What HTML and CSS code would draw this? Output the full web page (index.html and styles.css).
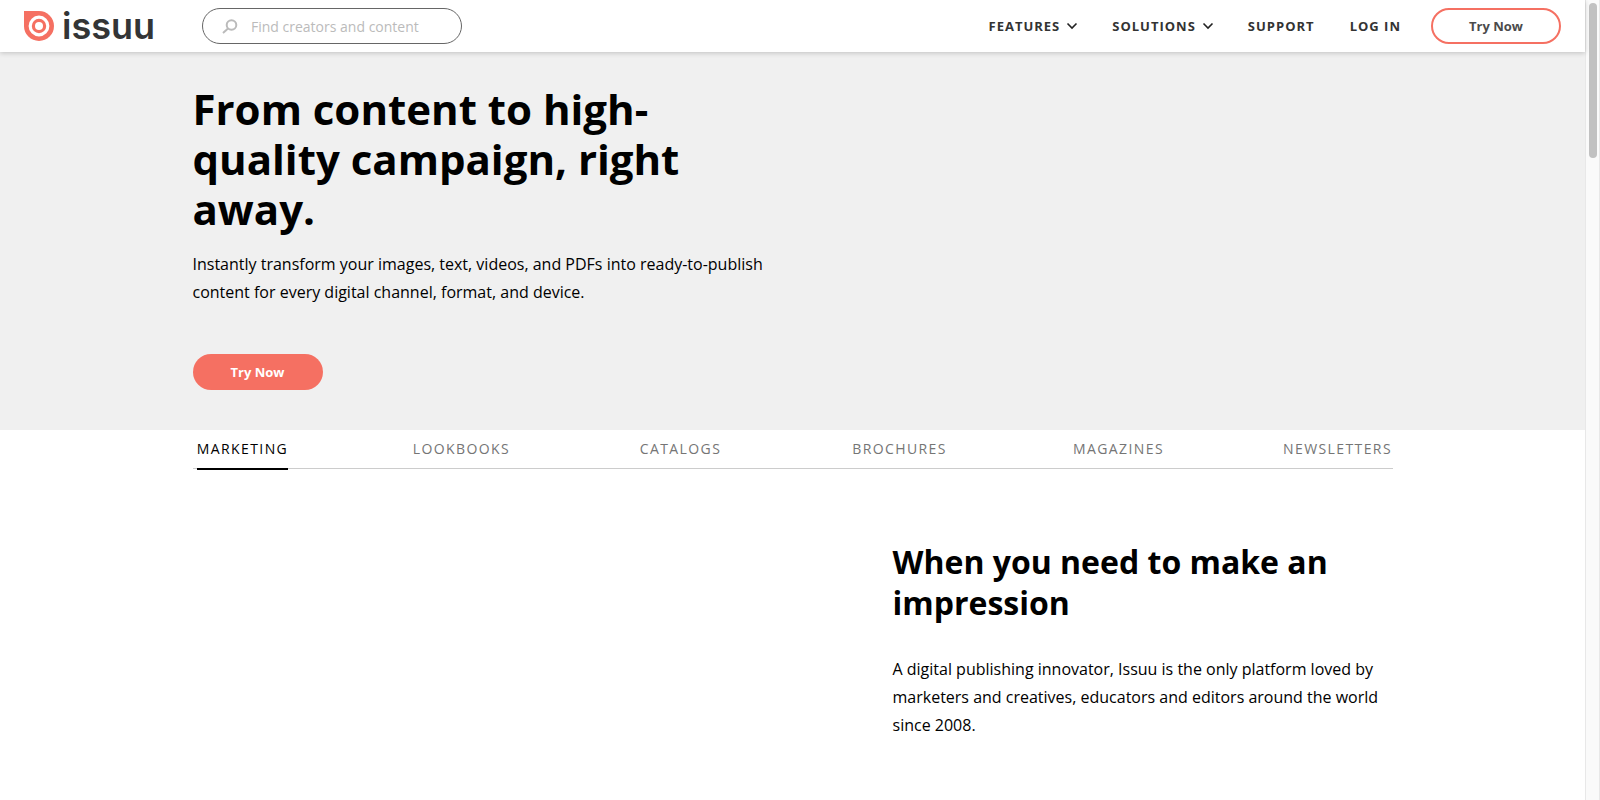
FILE: index.html
```html
<!DOCTYPE html>
<html lang="en">
<head>
<meta charset="utf-8">
<title>Issuu</title>
<link rel="stylesheet" href="styles.css">
</head>
<body>
<div class="page">
  <header class="header">
    <a class="logo" href="#">
      <svg class="logo-mark" viewBox="0 0 30 30" aria-hidden="true">
        <path fill="#f57062" d="M0 0h15a15 15 0 1 1-15 15z"/>
        <circle cx="15" cy="15" r="8.8" fill="none" stroke="#fff" stroke-width="3.2"/>
        <circle cx="15" cy="15" r="4" fill="#fff"/>
      </svg>
      <span class="wordmark">issuu</span>
    </a>
    <form class="search">
      <svg class="search-icon" viewBox="0 0 16 16" aria-hidden="true"><circle cx="9.5" cy="7" r="4.8"/><path d="M6 10.5L1 15"/></svg>
      <input class="search-input" type="text" aria-label="Search" placeholder="Find creators and content">
    </form>
    <nav class="nav">
      <button class="nav-item" type="button">FEATURES<svg class="chevron" viewBox="0 0 10 6" aria-hidden="true"><path d="M.5 .5L5 5 9.5 .5"/></svg></button>
      <button class="nav-item" type="button">SOLUTIONS<svg class="chevron" viewBox="0 0 10 6" aria-hidden="true"><path d="M.5 .5L5 5 9.5 .5"/></svg></button>
      <a class="nav-item" href="#">SUPPORT</a>
      <a class="nav-item" href="#">LOG IN</a>
    </nav>
    <a class="button button-outline" href="#">Try Now</a>
  </header>
  <main>
    <section class="hero">
      <div class="container">
        <div class="hero-copy">
          <h1 class="title">From content to high-quality campaign, right away.</h1>
          <p class="text">Instantly transform your images, text, videos, and PDFs into ready-to-publish content for every digital channel, format, and device.</p>
          <a class="button button-solid" href="#">Try Now</a>
        </div>
      </div>
    </section>
    <div class="container">
      <nav class="tabs">
        <div class="tab-row">
          <div class="tab-cell"><a class="tab tab-active" href="#">MARKETING</a></div>
          <div class="tab-cell"><a class="tab" href="#">LOOKBOOKS</a></div>
          <div class="tab-cell"><a class="tab" href="#">CATALOGS</a></div>
          <div class="tab-cell"><a class="tab" href="#">BROCHURES</a></div>
          <div class="tab-cell"><a class="tab" href="#">MAGAZINES</a></div>
          <div class="tab-cell"><a class="tab" href="#">NEWSLETTERS</a></div>
        </div>
      </nav>
      <section class="feature">
        <h2 class="subtitle">When you need to make an impression</h2>
        <p class="text">A digital publishing innovator, Issuu is the only platform loved by marketers and creatives, educators and editors around the world since 2008.</p>
      </section>
    </div>
  </main>
</div>
<div class="scrollbar" aria-hidden="true"><div class="scroll-thumb"></div></div>
</body>
</html>
```
FILE: styles.css
```css
* { box-sizing: border-box; }
body {
  margin: 0;
  min-height: 100vh;
  display: flex;
  background: #fff;
  color: #000;
  font-family: "Open Sans", "Noto Sans", sans-serif;
  font-size: 16px;
}
a { color: inherit; text-decoration: none; }
h1, h2, p { margin: 0; }
.page { flex: 1; min-width: 0; }
.header {
  position: relative;
  height: 52px;
  display: flex;
  align-items: center;
  padding: 0 24px;
  background: #fff;
  box-shadow: 0 1px 5px rgba(0, 0, 0, 0.2);
}
.logo { display: flex; align-items: center; gap: 8px; width: 178px; }
.logo-mark { width: 30px; height: 30px; }
.wordmark {
  color: #333536;
  font-family: Inter, "Open Sans", sans-serif;
  font-size: 36px;
  font-weight: 600;
  line-height: 36px;
}
.search {
  display: flex;
  align-items: center;
  gap: 13px;
  width: 260px;
  height: 36px;
  padding: 0 19px;
  border: 1px solid #666;
  border-radius: 18px;
}
.search-icon { flex: none; width: 16px; height: 16px; fill: none; stroke: #bbb; stroke-width: 2; }
.search-input {
  flex: 1;
  min-width: 0;
  padding: 0;
  border: 0;
  outline: 0;
  background: none;
  font: 14px "Open Sans", "Noto Sans", sans-serif;
}
.search-input::placeholder { color: #bbb; opacity: 1; }
.nav { display: flex; gap: 35px; margin-left: auto; margin-right: 30px; }
.nav-item {
  display: flex;
  align-items: center;
  gap: 7px;
  padding: 0;
  border: 0;
  background: none;
  color: #333;
  font: 700 13px/20px "Open Sans", "Noto Sans", sans-serif;
  letter-spacing: 1px;
}
.chevron { width: 10px; height: 6px; overflow: visible; fill: none; stroke: #222; stroke-width: 1.6; }
.button {
  display: flex;
  align-items: center;
  justify-content: center;
  width: 130px;
  height: 36px;
  border-radius: 18px;
  font-size: 13px;
  font-weight: 700;
}
.button-outline { border: 2px solid #f57062; color: #4b4b4b; }
.button-solid { background: #f57062; color: #fff; margin-top: 48px; }
.hero { background: #f0f0f0; padding: 32px 0 40px; }
.container { max-width: 1200px; margin: 0 auto; }
.hero-copy { width: 50%; }
.title { max-width: 500px; font-size: 42px; line-height: 50px; margin-bottom: 16px; }
.text { line-height: 28px; }
.tabs { height: 39px; border-bottom: 1px solid #ccc; }
.tab-row { display: flex; justify-content: space-between; margin-left: -5px; }
.tab-cell { display: flex; justify-content: center; width: 110px; }
.tab {
  height: 40px;
  padding-top: 9px;
  color: #757575;
  font-size: 14px;
  line-height: 20px;
  letter-spacing: 0.1em;
}
.tab-active { color: #000; border-bottom: 2px solid #000; }
.feature { width: 500px; margin: 72px 0 0 auto; }
.subtitle { font-size: 32px; line-height: 41px; margin-bottom: 32px; }
.scrollbar {
  width: 15px;
  padding: 3px 2px;
  background: #fafafa;
  border: 1px solid #e8e8e8;
  border-width: 0 1px;
}
.scroll-thumb { width: 8px; height: 155px; margin: 0 auto; border-radius: 4px; background: #c1c1c1; }
```
